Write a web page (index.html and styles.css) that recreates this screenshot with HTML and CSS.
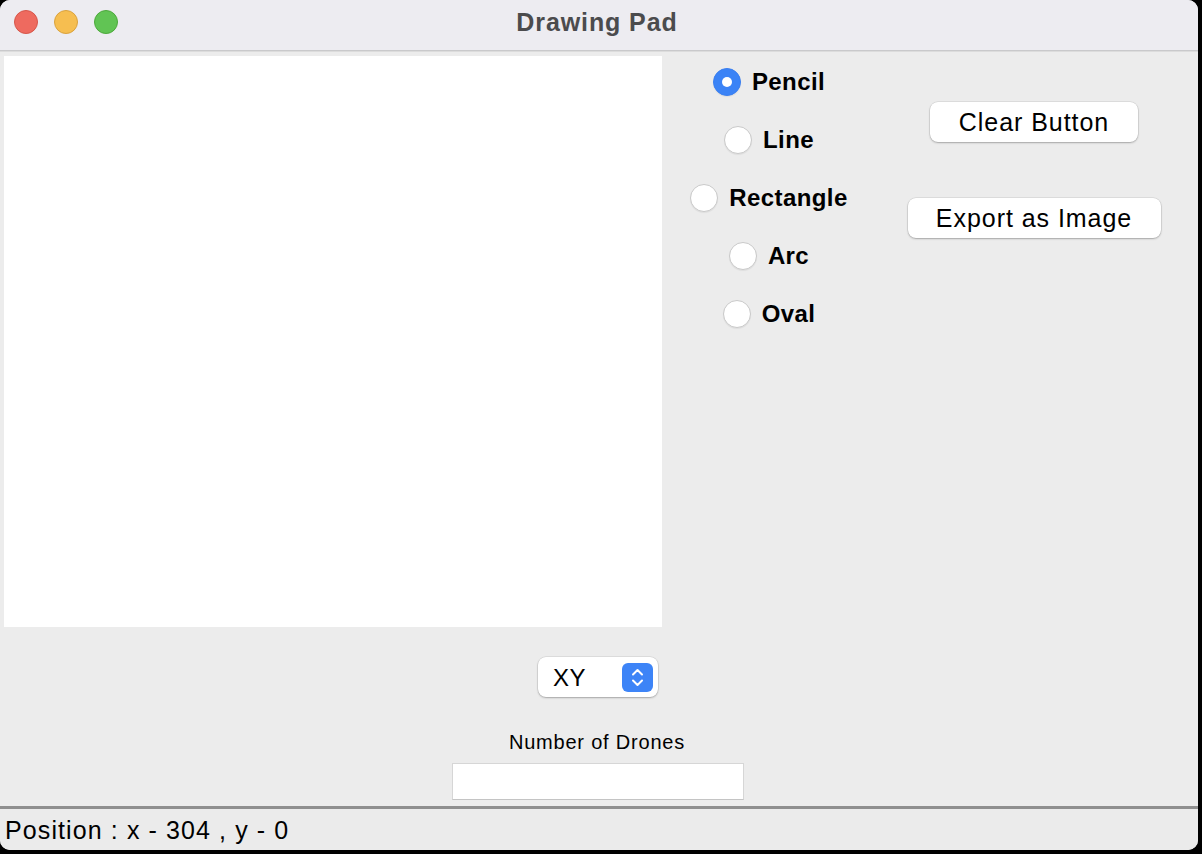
FILE: index.html
```html
<!DOCTYPE html>
<html>
<head>
<meta charset="utf-8">
<title>Drawing Pad</title>
<link rel="stylesheet" href="styles.css">
</head>
<body>
<div class="window">
  <div class="titlebar">
    <div class="lights">
      <span class="light red"></span>
      <span class="light yellow"></span>
      <span class="light green"></span>
    </div>
    <div class="title">Drawing Pad</div>
  </div>
  <div class="content">
    <div class="top">
      <div class="canvas"></div>
      <div class="tools">
        <div class="radios">
          <label class="radio-row"><span class="radio checked"></span><span class="radio-label">Pencil</span></label>
          <label class="radio-row"><span class="radio"></span><span class="radio-label">Line</span></label>
          <label class="radio-row"><span class="radio"></span><span class="radio-label">Rectangle</span></label>
          <label class="radio-row"><span class="radio"></span><span class="radio-label">Arc</span></label>
          <label class="radio-row"><span class="radio"></span><span class="radio-label">Oval</span></label>
        </div>
        <div class="buttons">
          <button class="btn btn-clear">Clear Button</button>
          <button class="btn btn-export">Export as Image</button>
        </div>
      </div>
    </div>
    <div class="select">
      <span class="select-text">XY</span>
      <span class="stepper">
        <svg width="31" height="29" viewBox="0 0 31 29">
          <path d="M11 11.5 L15.5 7 L20 11.5" fill="none" stroke="#fff" stroke-width="2" stroke-linecap="round" stroke-linejoin="round"/>
          <path d="M11 17.5 L15.5 22 L20 17.5" fill="none" stroke="#fff" stroke-width="2" stroke-linecap="round" stroke-linejoin="round"/>
        </svg>
      </span>
    </div>
    <div class="field-label">Number of Drones</div>
    <div class="textfield"></div>
  </div>
  <div class="status">Position : x - 304 , y - 0</div>
</div>
</body>
</html>
```
FILE: styles.css
```css
html, body {
  margin: 0;
  padding: 0;
  background: #000;
}
body {
  width: 1202px;
  height: 854px;
  overflow: hidden;
  font-family: "Liberation Sans", Arial, sans-serif;
}
.window {
  width: 1198px;
  height: 850px;
  background: #ececec;
  border-radius: 10px;
  overflow: hidden;
  display: flex;
  flex-direction: column;
}
.titlebar {
  height: 50px;
  flex: none;
  background: #edecf1;
  border-bottom: 1px solid #c9c9cb;
  box-shadow: 0 1px 0 #dcdcdc;
  position: relative;
  display: flex;
  align-items: center;
  justify-content: center;
}
.lights {
  position: absolute;
  left: 14px;
  top: 10px;
  display: flex;
  gap: 16px;
}
.light {
  width: 24px;
  height: 24px;
  border-radius: 50%;
  box-sizing: border-box;
  display: block;
}
.red { background: #ee6a5f; border: 1px solid #d5564a; }
.yellow { background: #f6be50; border: 1px solid #d9a23e; }
.green { background: #61c454; border: 1px solid #4da83c; }
.title {
  font-weight: bold;
  font-size: 25px;
  letter-spacing: 0.9px;
  color: #4b4b4d;
  margin-left: -4px;
  margin-top: -6px;
}
.content {
  flex: 1;
  display: flex;
  flex-direction: column;
  align-items: center;
  border-bottom: 3px solid #8f8f8f;
}
.top {
  align-self: stretch;
  display: flex;
}
.canvas {
  width: 658px;
  height: 571px;
  background: #fff;
  margin: 5px 0 0 4px;
  flex: none;
}
.tools {
  flex: 1;
  display: flex;
  padding-right: 6px;
}
.radios {
  width: 214px;
  flex: none;
  padding-top: 2px;
  display: flex;
  flex-direction: column;
  align-items: center;
}
.radio-row {
  height: 58px;
  display: flex;
  align-items: center;
  gap: 11px;
}
.radio {
  width: 28px;
  height: 28px;
  box-sizing: border-box;
  border-radius: 50%;
  background: #fff;
  border: 1px solid #c9c9c9;
  box-shadow: 0 1px 1px rgba(0,0,0,0.06);
  display: block;
  position: relative;
}
.radio.checked {
  background: #3b83f6;
  border-color: #3a7ff0;
}
.radio.checked::after {
  content: "";
  position: absolute;
  left: 8px;
  top: 8px;
  width: 10px;
  height: 10px;
  border-radius: 50%;
  background: #fff;
}
.radio-label {
  font-weight: bold;
  font-size: 24px;
  letter-spacing: 0.4px;
  color: #000;
}
.buttons {
  flex: 1;
  display: flex;
  flex-direction: column;
  align-items: center;
  padding-top: 51px;
  gap: 56px;
}
.btn {
  height: 40px;
  background: #fff;
  border: none;
  border-radius: 8px;
  box-shadow: 0 0 0 0.5px rgba(0,0,0,0.12), 0 1px 2px rgba(0,0,0,0.25);
  font-family: "Liberation Sans", Arial, sans-serif;
  font-size: 25px;
  letter-spacing: 0.95px;
  color: #000;
  padding: 0;
}
.btn-clear { width: 208px; }
.btn-export { width: 253px; }
.select {
  margin-top: 30px;
  width: 120px;
  height: 40px;
  box-sizing: border-box;
  background: #fff;
  border-radius: 8px;
  box-shadow: 0 0 0 0.5px rgba(0,0,0,0.12), 0 1px 2px rgba(0,0,0,0.25);
  display: flex;
  align-items: center;
  justify-content: space-between;
  padding: 0 5px 0 15px;
  margin-left: -2px;
}
.select-text {
  font-size: 24px;
  letter-spacing: 0.5px;
  color: #000;
  margin-top: 2px;
}
.stepper {
  width: 31px;
  height: 29px;
  background: #3d84f7;
  border-radius: 6px;
  display: block;
}
.stepper svg { display: block; }
.field-label {
  margin-top: 34px;
  font-size: 20px;
  letter-spacing: 0.8px;
  color: #000;
  margin-left: -4px;
}
.textfield {
  margin-top: 9px;
  width: 292px;
  height: 37px;
  box-sizing: border-box;
  background: #fff;
  border: 1px solid #d6d6d6;
  border-bottom-color: #c4c4c4;
  margin-left: -2px;
}
.status {
  height: 41px;
  flex: none;
  box-sizing: border-box;
  padding-left: 5px;
  padding-top: 7px;
  font-size: 25px;
  letter-spacing: 1.1px;
  color: #000;
  background: #ebebeb;
}
```
